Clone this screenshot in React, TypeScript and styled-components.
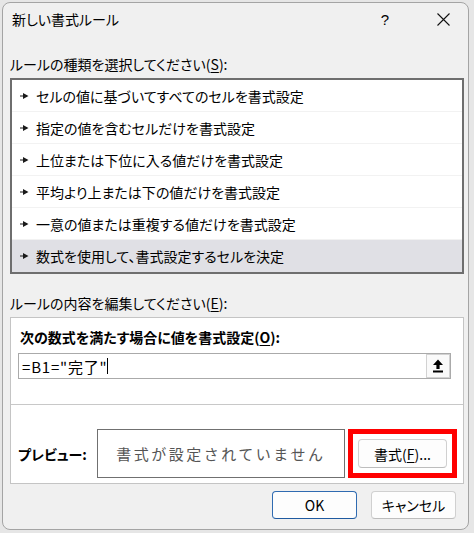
import React from "react";
import styled, { createGlobalStyle } from "styled-components";

const GlobalStyle = createGlobalStyle`
  html, body {
    margin: 0;
    padding: 0;
    background: #e6e6e6;
  }
  body {
    font-family: "Noto Sans CJK JP", "Noto Sans", sans-serif;
    font-feature-settings: "palt";
    color: #000;
  }
`;

const Window = styled.div`
  box-sizing: border-box;
  margin: 2px 0 0 2px;
  width: 467px;
  height: 528px;
  border: 1px solid #a4a4a4;
  border-radius: 8px;
  background: #f0f0f0;
  display: flex;
  flex-direction: column;
  overflow: hidden;
`;

const TitleBar = styled.div`
  height: 32px;
  display: flex;
  align-items: center;
  padding-left: 9px;
  font-size: 14px;
`;

const TitleText = styled.div`
  flex: 1;
`;

const TitleButton = styled.div<{ $w: number }>`
  width: ${(p) => p.$w}px;
  display: flex;
  justify-content: center;
  align-items: center;
  font-size: 15px;
  font-family: "Liberation Sans", sans-serif;
`;

const TitleGap = styled.div`
  width: 18px;
`;

const Body = styled.div`
  padding: 0 4px 0 7px;
  display: flex;
  flex-direction: column;
`;

const Label = styled.div<{ $top: number }>`
  margin-top: ${(p) => p.$top}px;
  height: 18px;
  line-height: 18px;
  font-size: 14px;
`;

const U = styled.span`
  text-decoration: underline;
  text-underline-offset: 2px;
`;

const List = styled.div`
  margin-top: 5px;
  border: 2px solid #6e6e6e;
  background: #fff;
`;

const Row = styled.div<{ $selected?: boolean }>`
  height: 32px;
  box-sizing: border-box;
  display: flex;
  align-items: center;
  padding-left: 8px;
  font-size: 14px;
  background: ${(p) => (p.$selected ? "#e0e0e5" : "#fff")};
  border-bottom: 1px solid ${(p) => (p.$selected ? "#e0e0e5" : "#f2f2f2")};
  &:last-child {
    border-bottom: none;
  }
`;

const Pointer = styled.svg`
  width: 9px;
  height: 8px;
  margin-right: 7px;
  flex: none;
`;

const Group = styled.div`
  margin-top: 5px;
  border: 1px solid #c4c4c4;
  background: #fff;
`;

const TopSection = styled.div`
  box-sizing: border-box;
  height: 87px;
  padding: 10px 12px 0 7px;
  border-bottom: 1px solid #c8c8c8;
`;

const BoldLabel = styled.div`
  font-weight: 700;
  font-size: 14px;
  height: 18px;
  line-height: 18px;
  margin-left: 2px;
`;

const FormulaBox = styled.div`
  box-sizing: border-box;
  margin-top: 7px;
  height: 26px;
  border: 1px solid #aaaaaa;
  display: flex;
  align-items: center;
  padding-left: 3px;
`;

const FormulaText = styled.span`
  font-size: 15px;
  font-feature-settings: normal;
  letter-spacing: 0.8px;
`;

const Caret = styled.span`
  display: inline-block;
  width: 1px;
  height: 16px;
  background: #000;
`;

const Spacer = styled.div`
  flex: 1;
`;

const RefButton = styled.div`
  box-sizing: border-box;
  width: 24px;
  height: 24px;
  border: 1px solid #d2d2d2;
  background: #fafafa;
  display: flex;
  align-items: center;
  justify-content: center;
`;

const BottomSection = styled.div`
  padding: 24px 6px 5px 7px;
  display: flex;
  align-items: center;
`;

const PreviewLabel = styled.div`
  width: 79px;
  font-weight: 700;
  font-size: 14px;
`;

const PreviewBox = styled.div`
  box-sizing: border-box;
  width: 249px;
  height: 49px;
  border: 1px solid #707070;
  display: flex;
  align-items: center;
  justify-content: center;
  color: #555;
  font-size: 15px;
  letter-spacing: 2.5px;
  font-feature-settings: normal;
`;

const Highlight = styled.div`
  margin-left: 3px;
  border: 5px solid #ff0000;
  padding: 5px;
`;

const Button = styled.div<{ $primary?: boolean; $w: number; $h: number }>`
  box-sizing: border-box;
  width: ${(p) => p.$w}px;
  height: ${(p) => p.$h}px;
  display: flex;
  align-items: center;
  justify-content: center;
  font-size: 14px;
  background: #fdfdfd;
  border-radius: 4px;
  border: 1px solid ${(p) => (p.$primary ? "#2f6bb1" : "#d0d0d0")};
  border-bottom-color: ${(p) => (p.$primary ? "#1f5aa0" : "#bdbdbd")};
`;

const Footer = styled.div`
  margin-top: 7px;
  padding-right: 8px;
  display: flex;
  justify-content: flex-end;
  gap: 14px;
`;

const rules = [
  "セルの値に基づいてすべてのセルを書式設定",
  "指定の値を含むセルだけを書式設定",
  "上位または下位に入る値だけを書式設定",
  "平均より上または下の値だけを書式設定",
  "一意の値または重複する値だけを書式設定",
  "数式を使用して、書式設定するセルを決定",
];

export default function App() {
  return (
    <>
      <GlobalStyle />
      <Window>
        <TitleBar>
          <TitleText>新しい書式ルール</TitleText>
          <TitleButton $w={30}>?</TitleButton>
          <TitleGap />
          <TitleButton $w={50}>
            <svg width="13" height="13" viewBox="0 0 13 13">
              <path d="M0.5 0.5 L12.5 12.5 M12.5 0.5 L0.5 12.5" stroke="#111" strokeWidth="1.1" />
            </svg>
          </TitleButton>
        </TitleBar>
        <Body>
          <Label $top={20}>
            ルールの種類を選択してください(<U>S</U>):
          </Label>
          <List>
            {rules.map((r, i) => (
              <Row key={r} $selected={i === rules.length - 1}>
                <Pointer viewBox="0 0 9 8">
                  <path d="M0 3.4 H3.5 V4.6 H0 Z M3 1 L8.5 4 L3 7 Z" fill="#1a1a1a" />
                </Pointer>
                {r}
              </Row>
            ))}
          </List>
          <Label $top={20}>
            ルールの内容を編集してください(<U>E</U>):
          </Label>
          <Group>
            <TopSection>
              <BoldLabel>
                次の数式を満たす場合に値を書式設定(<U>O</U>):
              </BoldLabel>
              <FormulaBox>
                <FormulaText>=B1="完了"</FormulaText>
                <Caret />
                <Spacer />
                <RefButton>
                  <svg width="12" height="14" viewBox="0 0 12 14">
                    <path d="M6 0.5 L11 6 H7.6 V10 H4.4 V6 H1 Z" fill="#000" />
                    <rect x="1" y="11.5" width="10" height="2" fill="#000" />
                  </svg>
                </RefButton>
              </FormulaBox>
            </TopSection>
            <BottomSection>
              <PreviewLabel>プレビュー:</PreviewLabel>
              <PreviewBox>書式が設定されていません</PreviewBox>
              <Highlight>
                <Button $w={89} $h={29}>
                  書式(<U>F</U>)...
                </Button>
              </Highlight>
            </BottomSection>
          </Group>
          <Footer>
            <Button $primary $w={85} $h={28}>
              OK
            </Button>
            <Button $w={85} $h={28}>
              キャンセル
            </Button>
          </Footer>
        </Body>
      </Window>
    </>
  );
}
